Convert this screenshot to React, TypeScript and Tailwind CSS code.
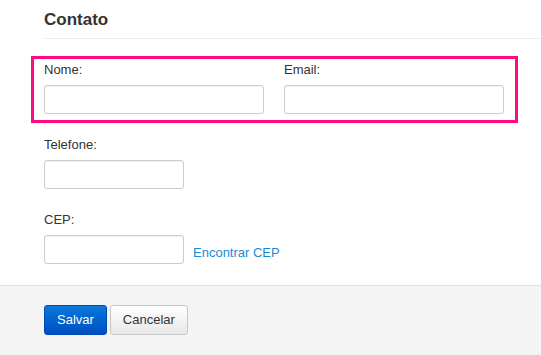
const inputCls =
  'block h-[29px] rounded-[3px] border border-[#cccccc] bg-white shadow-[inset_0_1px_1px_rgba(0,0,0,0.06)] outline-none';

function Field({ label, width }: { label: string; width: string }) {
  return (
    <div>
      <label className="block text-[13px] leading-4 text-[#333333] mb-[7px]">{label}</label>
      <input type="text" className={`${inputCls} ${width}`} />
    </div>
  );
}

export default function App() {
  return (
    <div className="w-[541px] h-[355px] bg-white flex flex-col font-['Liberation_Sans',Arial,sans-serif] overflow-hidden">
      <div className="pl-[44px]">
        <h2 className="pt-[10px] pb-[8px] text-[17px] leading-5 font-bold text-[#333333] border-b border-[#ececec]">
          Contato
        </h2>

        <div className="mt-[17px] -ml-[13px] w-[487px] border-[3px] border-[#ff0a84] pt-[3px] pb-[6px] pl-[10px]">
          <div className="grid grid-cols-[220px_220px] gap-x-[20px]">
            <Field label="Nome:" width="w-[220px]" />
            <Field label="Email:" width="w-[220px]" />
          </div>
        </div>

        <div className="mt-[14px]">
          <Field label="Telefone:" width="w-[140px]" />
        </div>

        <div className="mt-[23px] flex items-end">
          <Field label="CEP:" width="w-[140px]" />
          <a href="#" className="ml-[9px] mb-[3px] text-[13px] leading-4 text-[#1a8ad4]">
            Encontrar CEP
          </a>
        </div>
      </div>

      <div className="mt-[21px] flex-1 border-t border-[#e2e2e2] bg-[#f4f4f4] pl-[44px] pt-[19px]">
        <div className="flex gap-[3px]">
          <button className="h-[30px] px-[12px] rounded-[3px] border border-[#0049b8] bg-gradient-to-b from-[#0b78dc] to-[#004fc0] text-[13px] text-white">
            Salvar
          </button>
          <button className="h-[30px] px-[12px] rounded-[3px] border border-[#c8c8c8] bg-gradient-to-b from-white to-[#e8e8e8] text-[13px] text-[#333333]">
            Cancelar
          </button>
        </div>
      </div>
    </div>
  );
}
